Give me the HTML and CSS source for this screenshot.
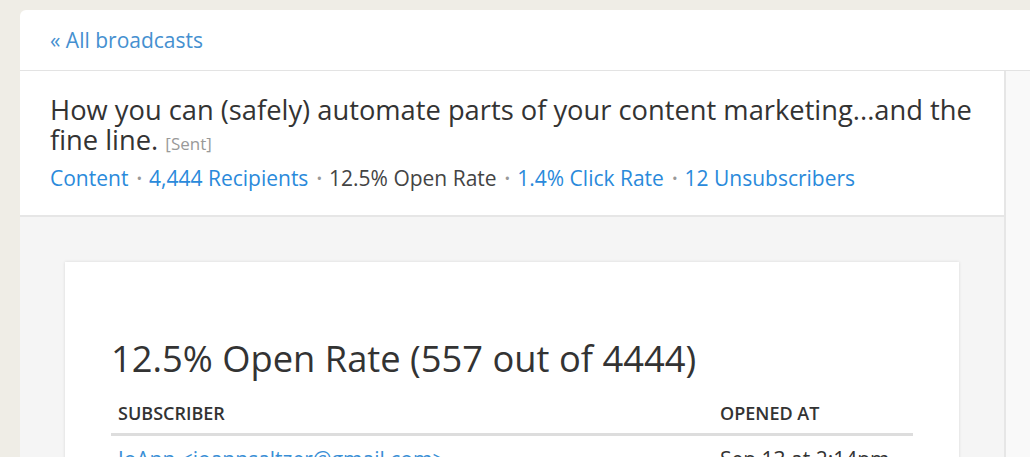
FILE: index.html
```html
<!DOCTYPE html>
<html>
<head>
<meta charset="utf-8">
<link rel="stylesheet" href="styles.css">
</head>
<body>
<div class="frame">
  <div class="topbar"><a class="back" href="#">« All broadcasts</a></div>
  <div class="layout">
    <div class="main">
      <div class="header">
        <h1 class="title">How you can (safely) automate parts of your content marketing...and the fine line. <span class="status">[Sent]</span></h1>
        <div class="stats">
          <a href="#">Content</a><span class="dot">•</span><a href="#">4,444 Recipients</a><span class="dot">•</span><span class="plain">12.5% Open Rate</span><span class="dot">•</span><a href="#">1.4% Click Rate</a><span class="dot">•</span><a href="#">12 Unsubscribers</a>
        </div>
      </div>
      <div class="content">
        <div class="card">
          <h2 class="card-title">12.5% Open Rate (557 out of 4444)</h2>
          <table class="table">
            <thead>
              <tr><th class="col-sub">Subscriber</th><th class="col-date">Opened at</th></tr>
            </thead>
            <tbody>
              <tr><td><a href="#">JoAnn &lt;joannsaltzer@gmail.com&gt;</a></td><td>Sep 13 at 2:14pm</td></tr>
            </tbody>
          </table>
        </div>
      </div>
    </div>
    <div class="side"></div>
  </div>
</div>
</body>
</html>
```

FILE: styles.css
```css
html, body {
  margin: 0;
  padding: 0;
  height: 100%;
  overflow: hidden;
}
body {
  background: #efede6;
  font-family: "Open Sans", "Liberation Sans", sans-serif;
  color: #333;
}
a { color: #3a8fd6; text-decoration: none; }

.frame {
  margin: 10px 0 0 20px;
  background: #fff;
  border-radius: 6px 0 0 0;
  height: 460px;
  overflow: hidden;
}
.topbar {
  height: 60px;
  padding: 0 30px;
  border-bottom: 1px solid #e3e3e3;
  display: flex;
  align-items: center;
}
.back {
  font-size: 21px;
  color: #4590d0;
  margin-top: -1px;
}
.layout {
  display: flex;
  height: 100%;
}
.main {
  width: 984px;
  flex: none;
  border-right: 2px solid #e6e6e6;
}
.side {
  flex: 1;
  background: #f9f9f9;
}
.header {
  padding: 24px 30px 23px 30px;
  border-bottom: 2px solid #e6e6e6;
}
.title {
  margin: 0;
  font-size: 27.3px;
  font-weight: 400;
  line-height: 30px;
  color: #333;
}
.status {
  font-size: 17px;
  line-height: 1;
  color: #999;
}
.stats {
  margin-top: 9px;
  font-size: 21px;
  line-height: 28px;
}
.stats a { color: #2a8adb; }
.stats .plain { color: #444; }
.dot {
  color: #999;
  font-size: 15px;
  line-height: 1;
  padding: 0 7px 0 8px;
  position: relative;
  top: -2px;
}
.content {
  background: #f5f5f5;
  padding: 45px 45px;
  height: 300px;
}
.card {
  background: #fff;
  box-shadow: 0 0 3px rgba(0,0,0,0.12);
  padding: 74px 46px 20px;
}
.card-title {
  margin: 0 0 14px;
  font-size: 36.3px;
  font-weight: 400;
  line-height: 44px;
  color: #333;
}
.table {
  width: 100%;
  border-collapse: collapse;
}
.table th {
  text-align: left;
  text-transform: uppercase;
  font-size: 18px;
  font-weight: 600;
  color: #333;
  padding: 8px 7px 8px;
  line-height: 23px;
  border-bottom: 3px solid #ddd;
}
.table th.col-date { width: 186px; }
.table td {
  font-size: 21px;
  line-height: 28px;
  padding: 9px 7px;
  color: #333;
}
.table td a { color: #3a8fd6; }
```
